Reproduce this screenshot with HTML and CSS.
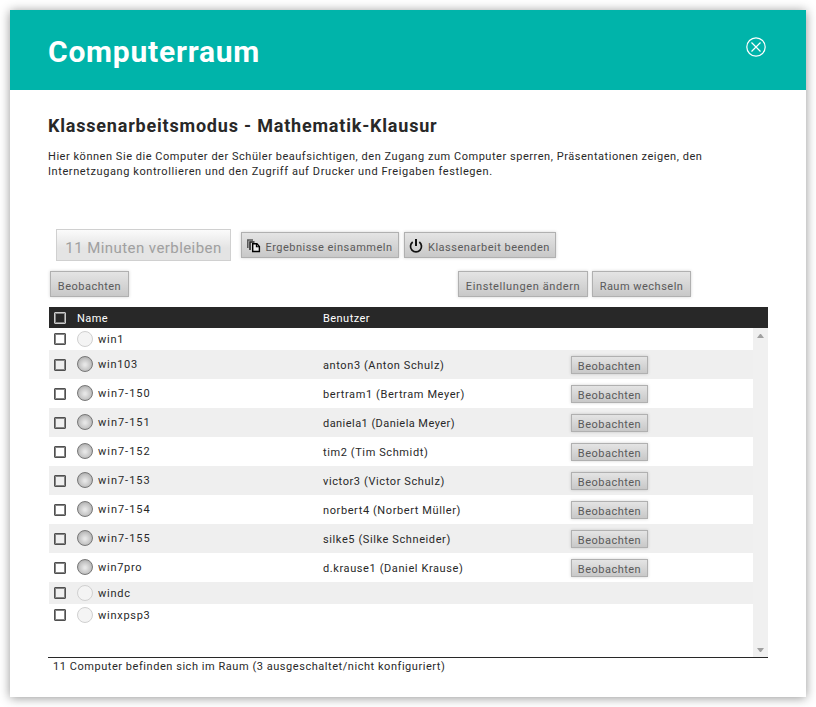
FILE: index.html
```
<!DOCTYPE html>
<html lang="de">
<head>
<meta charset="utf-8">
<title>Computerraum</title>
<link rel="stylesheet" href="styles.css">
</head>
<body>
<main class="dialog">
  <header class="titlebar">
    <h1>Computerraum</h1>
    <svg class="close" width="20" height="20" viewBox="0 0 20 20" fill="none" stroke="#fff"><circle cx="10" cy="10" r="9.2" stroke-width="1.2"/><path d="M5.5 5.5l9 9M14.5 5.5l-9 9" stroke-width="1.2"/></svg>
  </header>
  <section class="content">
    <h2>Klassenarbeitsmodus - Mathematik-Klausur</h2>
    <p class="intro">Hier können Sie die Computer der Schüler beaufsichtigen, den Zugang zum Computer sperren, Präsentationen zeigen, den<br><span class="wide">Internetzugang kontrollieren und den Zugriff auf Drucker und Freigaben festlegen.</span></p>
    <div class="exam-bar">
      <button class="btn timer" disabled>11 Minuten verbleiben</button>
      <button class="btn collect"><svg width="14" height="14" viewBox="0 0 14 14" fill="none"><path d="M.8 9V1H6" stroke="#555" stroke-width="1.5"/><path d="M3 11V3h4.5" stroke="#222" stroke-width="1.5"/><path d="M5.7 4.7h4.2L12.4 7.4v5.1H5.7z" fill="#eee" stroke="#000" stroke-width="1.4"/><path d="M9.4 4.7v3.1h3" stroke="#000" stroke-width="1.1"/></svg>Ergebnisse einsammeln</button>
      <button class="btn finish"><svg width="14" height="14" viewBox="0 0 14 14" fill="none" stroke="#111"><path d="M3.7 3A5.5 5.5 0 1 0 10.3 3" stroke-width="1.7"/><path d="M7 0v7" stroke-width="2"/></svg>Klassenarbeit beenden</button>
    </div>
    <div class="tool-bar">
      <button class="btn">Beobachten</button>
      <span class="spacer"></span>
      <button class="btn settings">Einstellungen ändern</button>
      <button class="btn room">Raum wechseln</button>
    </div>
    <div class="grid">
      <div class="row head"><i class="check"></i><span class="name">Name</span><span class="user">Benutzer</span></div>
      <div class="viewport">
        <div class="rows">
          <div class="row short"><i class="check"></i><i class="lamp off"></i><span class="name">win1</span></div>
          <div class="row"><i class="check"></i><i class="lamp"></i><span class="name">win103</span><span class="user">anton3 (Anton Schulz)</span><button class="btn">Beobachten</button></div>
          <div class="row"><i class="check"></i><i class="lamp"></i><span class="name numbered">win7-150</span><span class="user">bertram1 (Bertram Meyer)</span><button class="btn">Beobachten</button></div>
          <div class="row"><i class="check"></i><i class="lamp"></i><span class="name numbered">win7-151</span><span class="user tight">daniela1 (Daniela Meyer)</span><button class="btn">Beobachten</button></div>
          <div class="row"><i class="check"></i><i class="lamp"></i><span class="name numbered">win7-152</span><span class="user">tim2 (Tim Schmidt)</span><button class="btn">Beobachten</button></div>
          <div class="row"><i class="check"></i><i class="lamp"></i><span class="name numbered">win7-153</span><span class="user">victor3 (Victor Schulz)</span><button class="btn">Beobachten</button></div>
          <div class="row"><i class="check"></i><i class="lamp"></i><span class="name numbered">win7-154</span><span class="user">norbert4 (Norbert Müller)</span><button class="btn">Beobachten</button></div>
          <div class="row"><i class="check"></i><i class="lamp"></i><span class="name numbered">win7-155</span><span class="user">silke5 (Silke Schneider)</span><button class="btn">Beobachten</button></div>
          <div class="row"><i class="check"></i><i class="lamp"></i><span class="name">win7pro</span><span class="user">d.krause1 (Daniel Krause)</span><button class="btn">Beobachten</button></div>
          <div class="row short"><i class="check"></i><i class="lamp off"></i><span class="name">windc</span></div>
          <div class="row short"><i class="check"></i><i class="lamp off"></i><span class="name">winxpsp3</span></div>
        </div>
        <div class="scrollbar"><i class="up"></i><i class="down"></i></div>
      </div>
    </div>
    <footer class="status">11 Computer befinden sich im Raum (3 ausgeschaltet/nicht konfiguriert)</footer>
  </section>
</main>
</body>
</html>
```
FILE: styles.css
```
* { box-sizing: border-box; }
body {
  margin: 0;
  padding: 10px;
  background: #fff;
  color: #282828;
  font: 11px/15px Roboto, "Liberation Sans", sans-serif;
  letter-spacing: .535px;
}
.dialog { height: 687px; background: #fff; box-shadow: 0 1px 10px rgba(0, 0, 0, .42); }
.titlebar {
  height: 80px;
  padding: 0 40px 0 38px;
  display: flex;
  justify-content: space-between;
  background: #00b4aa;
  color: #fff;
}
h1 { margin: 24px 0 0; font-size: 30px; line-height: 36px; letter-spacing: .76px; }
.close { margin-top: 27px; }
.content { padding: 23px 38px 0; }
h2 { margin: 0; font-size: 18px; line-height: 25px; letter-spacing: .8px; }
.intro { margin: 11px 0 0; white-space: nowrap; }
.intro .wide { letter-spacing: .59px; }
.btn {
  height: 26px;
  padding: 5px 0 0;
  width: 79px;
  flex: none;
  display: flex;
  align-items: center;
  justify-content: center;
  border: 1px solid #b0b0b0;
  border-radius: 0;
  background: linear-gradient(#e4e4e4, #c8c8c8);
  box-shadow: 0 0 3px rgba(0, 0, 0, .18);
  color: #5a5a5a;
  font: inherit;
  letter-spacing: .49px;
  white-space: nowrap;
}
.exam-bar { margin: 50px 0 0 8px; display: flex; align-items: center; }
.btn.timer {
  width: 175px;
  height: 32px;
  padding-top: 6px;
  border-color: #d0d0d0;
  background: linear-gradient(#fbfbfb, #e4e4e4 60%);
  box-shadow: none;
  color: #a0a0a0;
  font-size: 15px;
  letter-spacing: .43px;
}
.btn.collect { width: 158px; margin-left: 10px; }
.btn.finish { width: 152px; margin-left: 5px; padding-right: 1px; }
.btn svg { margin: -4px 5px 0 0; }
.btn.collect svg { margin-right: 4px; }
.tool-bar { margin: 10px 77px 0 2px; display: flex; }
.spacer { flex: 1; }
.btn.settings { width: 130px; margin-right: 4px; letter-spacing: .6px; }
.btn.room { width: 99px; }
.grid { margin: 10px 0 0 1px; }
.row { height: 29px; padding-left: 5px; display: flex; align-items: center; }
.row:nth-child(even) { background: #efefef; }
.row.short { height: 22px; }
.check { width: 12px; height: 12px; flex: none; border: 1px solid #505050; border-radius: 1px; box-shadow: inset 0 0 0 1px #858585; }
.row:not(.short):not(.head) .check { margin-top: 1px; }
.lamp {
  width: 16px;
  height: 16px;
  margin: -1px 5px 0 11px;
  flex: none;
  border: 1px solid #777;
  border-radius: 50%;
  background: radial-gradient(circle at 50% 55%, #e6e6e6 10%, #c8c8c8 50%, #999);
}
.lamp.off { margin-top: 0; border-color: #d0d0d0; background: #f4f4f4; }
.name { width: 225px; letter-spacing: .73px; }
.name.numbered { letter-spacing: .98px; }
.row:not(.short) .name { margin-top: -1px; }
.user { width: 248px; margin-top: 1px; letter-spacing: .6px; }
.user.tight { letter-spacing: .45px; }
.row .btn { width: 77px; height: 18px; padding-top: 3px; margin-top: 1px; }
.row.head { height: 21px; background: #282828; color: #fff; }
.row.head .check { border-color: #ccc; }
.row.head .name { width: 246px; margin: 1px 0 0 11px; letter-spacing: .4px; }
.row.head .user { letter-spacing: .45px; }
.viewport { height: 329px; display: flex; }
.rows { flex: 1; }
.scrollbar {
  width: 15px;
  padding: 6px 4px 5px;
  display: flex;
  flex-direction: column;
  justify-content: space-between;
  background: #f0f0f0;
}
.up, .down { border: solid transparent; border-width: 0 3.5px; }
.up { border-bottom: 4px solid #a0a0a0; }
.down { border-top: 4px solid #a0a0a0; }
.status { padding: 1px 5px 0; border-top: 1px solid #282828; letter-spacing: .545px; }
```
